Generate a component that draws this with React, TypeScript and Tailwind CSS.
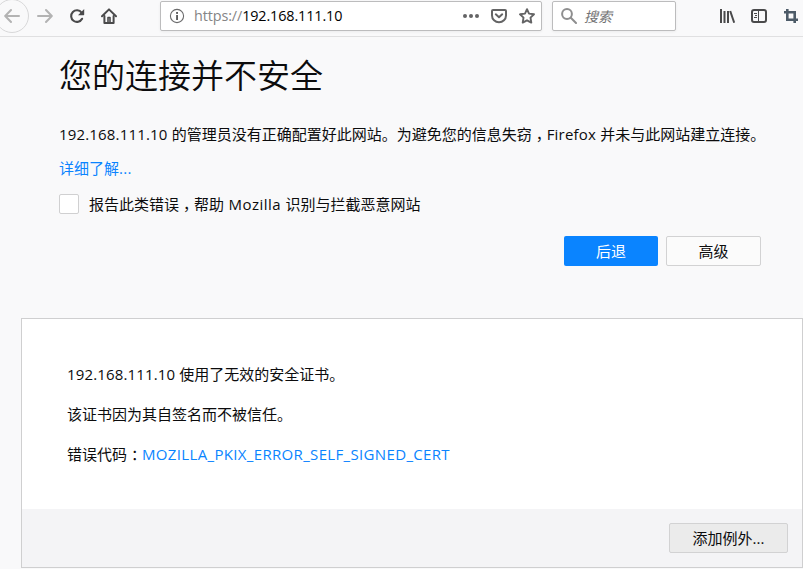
import React from "react";

function BackIcon() {
  return (
    <svg width="16" height="16" viewBox="0 0 16 16" fill="none" stroke="#b3b3b3" strokeWidth="2" strokeLinecap="round" strokeLinejoin="round">
      <path d="M15 8H1.5M7 2L1.2 8L7 14" />
    </svg>
  );
}

function ForwardIcon() {
  return (
    <svg width="16" height="16" viewBox="0 0 16 16" fill="none" stroke="#b3b3b3" strokeWidth="2" strokeLinecap="round" strokeLinejoin="round">
      <path d="M1 8H14.5M9 2L14.8 8L9 14" />
    </svg>
  );
}

function ReloadIcon() {
  return (
    <svg width="16" height="16" viewBox="0 0 16 16">
      <path d="M12.6 4.6A5.8 5.8 0 1 0 13.1 10.8" fill="none" stroke="#4a4a4b" strokeWidth="2.1" strokeLinecap="round" />
      <path d="M15.2 1v5.6a.6.6 0 0 1-.6.6H9z" fill="#4a4a4b" />
    </svg>
  );
}

function HomeIcon() {
  return (
    <svg width="16" height="16" viewBox="0 0 16 16" fill="none" stroke="#4a4a4b" strokeWidth="2" strokeLinecap="round" strokeLinejoin="round">
      <path d="M1 8.2L8 1.4L15 8.2" />
      <path d="M3.4 8v7h9.2V8" />
      <path d="M7 14.5V9.5h2v5" strokeWidth="1.6" />
    </svg>
  );
}

function InfoIcon() {
  return (
    <svg width="16" height="16" viewBox="0 0 16 16">
      <circle cx="8" cy="8" r="6.6" fill="none" stroke="#6b6b6c" strokeWidth="1.1" />
      <rect x="7.1" y="4" width="1.9" height="1.9" fill="#5c5c5d" />
      <rect x="7.1" y="7" width="1.9" height="5" fill="#5c5c5d" />
    </svg>
  );
}

function DotsIcon() {
  return (
    <svg width="16" height="16" viewBox="0 0 16 16" fill="#646465">
      <circle cx="2" cy="8" r="2" />
      <circle cx="8" cy="8" r="2" />
      <circle cx="14" cy="8" r="2" />
    </svg>
  );
}

function PocketIcon() {
  return (
    <svg width="16" height="16" viewBox="0 0 16 16" fill="none" stroke="#646465" strokeWidth="2" strokeLinecap="round" strokeLinejoin="round">
      <path d="M2 2h12a1 1 0 0 1 1 1v4.4a7 6.8 0 0 1-14 0V3a1 1 0 0 1 1-1z" />
      <path d="M4.8 6.3L8 9.2L11.2 6.3" />
    </svg>
  );
}

function StarIcon() {
  return (
    <svg width="16" height="16" viewBox="0 0 16 16" fill="none" stroke="#646465" strokeWidth="1.9" strokeLinejoin="round">
      <path d="M8 1.2L10 5.6L15 6.3L11.5 9.6L12.3 14.6L8 12.3L3.7 14.6L4.5 9.6L1 6.3L6 5.6Z" />
    </svg>
  );
}

function SearchIcon() {
  return (
    <svg width="16" height="16" viewBox="0 0 16 16" fill="none" stroke="#8e8e8f" strokeWidth="2" strokeLinecap="round">
      <circle cx="6" cy="6" r="4.9" />
      <path d="M9.8 9.8L15 15" />
    </svg>
  );
}

function LibraryIcon() {
  return (
    <svg width="16" height="16" viewBox="0 0 16 16" fill="none" stroke="#4a4a4b" strokeWidth="2">
      <path d="M2 1v14M5.5 3v12M9 3v12" strokeWidth="2" />
      <path d="M11.2 3L15.2 14.8" />
    </svg>
  );
}

function SidebarIcon() {
  return (
    <svg width="16" height="16" viewBox="0 0 16 16" fill="none" stroke="#4a4a4b">
      <rect x="1" y="2" width="14" height="12" rx="2" strokeWidth="2" />
      <path d="M7.5 2v12M3 5.5h3M4 7.5h2M3 9.5h3" strokeWidth="1" />
    </svg>
  );
}

function CropIcon() {
  return (
    <svg width="16" height="16" viewBox="0 0 16 16" fill="none" stroke="#4d5b68" strokeWidth="2.6">
      <path d="M4.3 1v10.7H15M1 4.3h10.7V15" />
    </svg>
  );
}

function WideMark({ children }: { children: React.ReactNode }) {
  return <span className="ml-[4px] tracking-[-4px]">{children}</span>;
}

function Toolbar() {
  return (
    <header className="flex h-[37px] items-start overflow-hidden border-b border-[#e0e0e1] bg-[#f9f9fa]">
      <div className="flex h-8 w-[160px] shrink-0 items-center">
        <div className="-ml-[5px] flex size-[34px] shrink-0 items-center justify-center rounded-full border border-[#d8d8d9]">
          <BackIcon />
        </div>
        <div className="ml-2 flex gap-4">
          <ForwardIcon />
          <ReloadIcon />
          <HomeIcon />
        </div>
      </div>
      <div className="mt-px flex h-[30px] w-[382px] shrink-0 items-center rounded-[2px] border border-[#bcbcbd] bg-white pr-[6px] pl-2 shadow-[0_1px_3px_rgba(0,0,0,0.06)]">
        <InfoIcon />
        <span className="ml-[9px] flex-1 text-[14.4px] leading-[20px] tracking-[-0.12px] text-black">
          <span className="text-[#858586]">https://</span>192.168.111.10
        </span>
        <div className="flex gap-3">
          <DotsIcon />
          <PocketIcon />
          <StarIcon />
        </div>
      </div>
      <div className="mt-px ml-[10px] flex h-[30px] w-[124px] shrink-0 items-center rounded-[2px] border border-[#bcbcbd] bg-white pl-2 shadow-[0_1px_3px_rgba(0,0,0,0.06)]">
        <SearchIcon />
        <span className="ml-[7px] pt-px text-[14px] leading-[20px] text-[#737374] italic">搜索</span>
      </div>
      <div className="ml-[43px] flex h-8 shrink-0 items-center gap-4">
        <LibraryIcon />
        <SidebarIcon />
        <CropIcon />
      </div>
    </header>
  );
}

export default function App() {
  return (
    <div className="flex h-[569px] w-[803px] flex-col overflow-hidden bg-[#f9f9fa] font-['Open_Sans','Noto_Sans_CJK_SC',sans-serif] text-[15px] leading-[20px] whitespace-nowrap text-[#0c0c0d]">
      <Toolbar />
      <main className="flex flex-1 flex-col">
        <section className="flex h-[281px] shrink-0 flex-col pt-[18px] pl-[59px]">
          <h1 className="h-[42px] text-[33px] leading-[42px] font-[350]">您的连接并不安全</h1>
          <p className="mt-[27px]">
            <span className="tracking-[0.17px]">192.168.111.10 </span>的管理员没有正确配置好此网站。为避免您的信息失窃<WideMark>，</WideMark>
            <span className="tracking-[0.2px]">Firefox </span>并未与此网站建立连接。
          </p>
          <a className="mt-[14px] text-[#0a84ff]">详细了解<span className="tracking-[0.3px]">...</span></a>
          <label className="mt-[16px] flex h-[20px] items-center gap-[10px]">
            <span className="size-5 rounded-[2px] border border-[#d0d0d1] bg-white" />
            <span>
              报告此类错误<WideMark>，</WideMark>帮助<span className="tracking-[0.5px]"> Mozilla </span>识别与拦截恶意网站
            </span>
          </label>
          <div className="mt-[22px] flex w-[702px] justify-end gap-2">
            <button className="h-[30px] w-[94px] rounded-[2px] bg-[#0a84ff] text-white">后退</button>
            <button className="h-[30px] w-[95px] rounded-[2px] border border-[#d2d2d3] bg-[#fbfbfb]">高级</button>
          </div>
        </section>
        <section className="ml-[21px] flex h-[250px] shrink-0 flex-col border border-[#cfcfd0] bg-white">
          <div className="flex h-[190px] flex-col gap-5 pt-[45px] pl-[45px]">
            <p><span className="tracking-[0.15px]">192.168.111.10 </span>使用了无效的安全证书。</p>
            <p>该证书因为其自签名而不被信任。</p>
            <p>
              错误代码<WideMark>：</WideMark>
              <a className="tracking-[0.34px] text-[#0a84ff]">MOZILLA_PKIX_ERROR_SELF_SIGNED_CERT</a>
            </p>
          </div>
          <footer className="flex flex-1 items-center justify-end bg-[#f4f4f6] pr-[14px]">
            <button className="h-[30px] w-[119px] rounded-[2px] border border-[#d2d2d3] bg-[#ebebeb]">添加例外...</button>
          </footer>
        </section>
      </main>
    </div>
  );
}
